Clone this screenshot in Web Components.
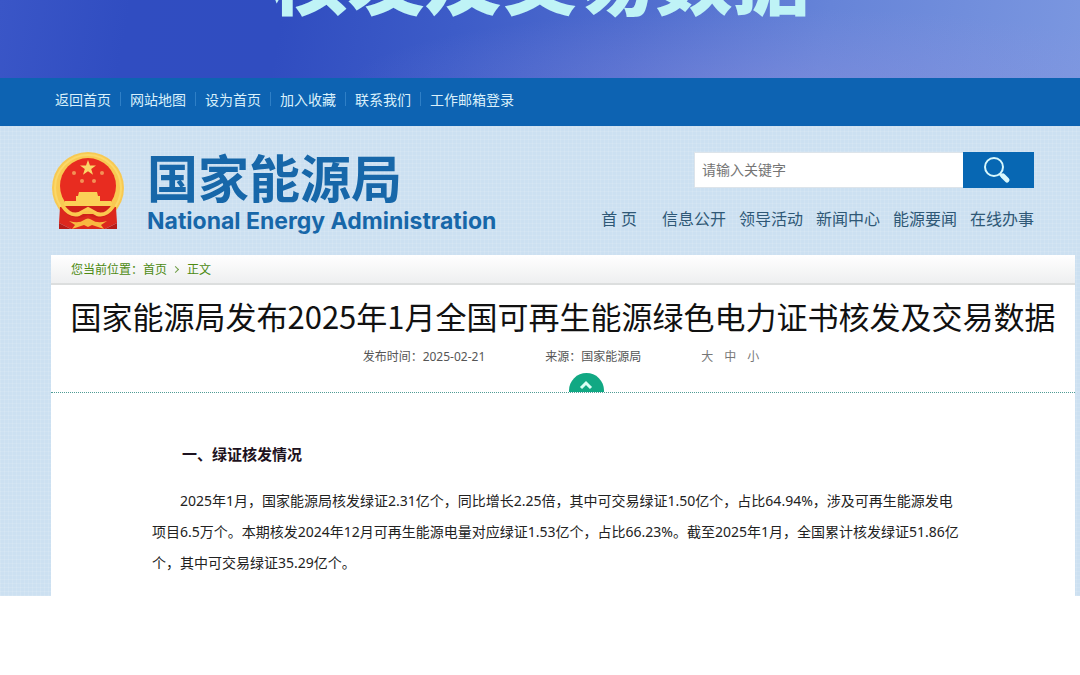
<!DOCTYPE html>
<html lang="zh-CN">
<head>
<meta charset="UTF-8">
<meta name="viewport" content="width=device-width, initial-scale=1">
<title>国家能源局</title>
<style>
  body {
    margin: 0;
    background: #ffffff;
    color: #1a1a1a;
    font-family: "Noto Sans CJK SC", sans-serif;
  }
</style>
</head>
<body>
<site-banner>核发及交易数据</site-banner>

<top-links>
  <a href="#home">返回首页</a>
  <a href="#map">网站地图</a>
  <a href="#set-home">设为首页</a>
  <a href="#favorite">加入收藏</a>
  <a href="#contact">联系我们</a>
  <a href="#mail">工作邮箱登录</a>
</top-links>

<site-main>
  <site-header>
    <site-logo slot="logo">国家能源局<span slot="en">National Energy Administration</span></site-logo>
    <search-box slot="search" placeholder="请输入关键字"></search-box>
    <a class="first" href="#home">首 页</a>
    <a href="#info">信息公开</a>
    <a href="#leader">领导活动</a>
    <a href="#news">新闻中心</a>
    <a href="#energy">能源要闻</a>
    <a href="#service">在线办事</a>
  </site-header>

  <article-card>
    <crumb-bar slot="crumb"><a href="#home">首页</a><a href="#text">正文</a></crumb-bar>
    <h1 slot="title">国家能源局发布2025年1月全国可再生能源绿色电力证书核发及交易数据</h1>
    <span slot="date">2025-02-21</span>
    <span slot="source">国家能源局</span>
    <h2>一、绿证核发情况</h2>
    <p>2025年1月，国家能源局核发绿证2.31亿个，同比增长2.25倍，其中可交易绿证1.50亿个，占比64.94%，涉及可再生能源发电项目6.5万个。本期核发2024年12月可再生能源电量对应绿证1.53亿个，占比66.23%。截至2025年1月，全国累计核发绿证51.86亿个，其中可交易绿证35.29亿个。</p>
  </article-card>
</site-main>

<script>
function define(name, html, setup) {
  const template = document.createElement('template');
  template.innerHTML = html;

  customElements.define(name, class extends HTMLElement {
    constructor() {
      super();
      this.attachShadow({ mode: 'open' }).append(template.content.cloneNode(true));
    }

    connectedCallback() {
      setup?.(this, this.shadowRoot);
    }
  });
}

define('site-banner', `
  <style>
    :host {
      display: flex;
      align-items: flex-end;
      justify-content: center;
      box-sizing: border-box;
      height: 78px;
      padding-bottom: 64px;
      overflow: hidden;
      background:
        radial-gradient(ellipse 40% 100% at 72% 110%, rgba(150, 150, 225, 0.35), transparent),
        linear-gradient(100deg, #3a56c7 0%, #304dc1 12%, #304dc0 26%, #3d5cc8 42%, #4f6cce 58%, #6684d8 76%, #7b97e0 100%);
      color: #bff3f6;
      font-size: 77px;
      font-weight: 900;
      line-height: 77px;
      white-space: nowrap;
    }
  </style>
  <slot></slot>
`);

define('top-links', `
  <style>
    :host {
      display: block;
      background: #0d63b2;
    }

    nav {
      display: flex;
      align-items: center;
      height: 48px;
      padding: 0 46px;
      padding-bottom: 6px;
      box-sizing: border-box;
    }

    ::slotted(a) {
      padding: 0 9px;
      border-left: 1px solid #2f7fc6;
      color: #d9f0fb;
      font-size: 14px;
      line-height: 14px;
      text-decoration: none;
    }

    ::slotted(a:first-child) {
      border-left: 0;
    }
  </style>
  <nav><slot></slot></nav>
`);

define('site-main', `
  <style>
    :host {
      display: block;
      padding: 26px 5px 0 51px;
      background:
        repeating-linear-gradient(90deg, rgba(255, 255, 255, 0.1) 0 1px, transparent 1px 4px),
        repeating-linear-gradient(0deg, rgba(255, 255, 255, 0.1) 0 1px, transparent 1px 4px),
        #cce0f1;
    }
  </style>
  <slot></slot>
`);

define('site-header', `
  <style>
    :host {
      display: flex;
      justify-content: space-between;
      height: 103px;
      padding-right: 41px;
    }

    .side {
      display: flex;
      flex-direction: column;
      align-items: flex-end;
      gap: 18px;
    }

    nav {
      display: flex;
      gap: 13px;
    }

    ::slotted(a) {
      color: #2f5876;
      font-size: 16px;
      line-height: 24px;
      text-decoration: none;
      white-space: nowrap;
    }

    ::slotted(a.first) {
      margin-right: 12px;
    }
  </style>
  <slot name="logo"></slot>
  <div class="side">
    <slot name="search"></slot>
    <nav><slot></slot></nav>
  </div>
`);

define('site-logo', `
  <style>
    :host {
      display: flex;
      align-items: flex-start;
      gap: 22px;
      color: #1767a9;
    }

    svg {
      flex: none;
      width: 74px;
      height: 78px;
    }

    .name {
      font-family: "Liberation Sans", "Noto Sans CJK SC", sans-serif;
      font-size: 51px;
      font-weight: 700;
      line-height: 58px;
      white-space: nowrap;
    }

    .en {
      font-family: Inter, "Liberation Sans", sans-serif;
      font-size: 23px;
      font-weight: 700;
      line-height: 22px;
      white-space: nowrap;
    }
  </style>
  <svg viewBox="0 0 74 78" aria-hidden="true">
    <circle cx="37" cy="36" r="36" fill="#f8c952"/>
    <circle cx="37" cy="36" r="33" fill="none" stroke="#fbd868" stroke-width="2"/>
    <path d="M9 55 L8 71 L20 77 H54 L66 71 L65 55 Z" fill="#dc281d"/>
    <path d="M8 71 L20 77 H8 Z M66 71 L54 77 H66 Z" fill="#b81c18"/>
    <circle cx="37" cy="34" r="28" fill="#e82c20"/>
    <path d="M37 8 l2 5.500 6 0 -4.800 3.600 1.800 5.600 -5 -3.500 -5 3.500 1.800 -5.600 -4.800 -3.600 6 0 Z" fill="#fbd768"/>
    <g fill="#f29256">
      <circle cx="23" cy="21" r="2"/>
      <circle cx="51" cy="21" r="2"/>
      <circle cx="31" cy="29" r="2"/>
      <circle cx="43" cy="29" r="2"/>
    </g>
    <path d="M28 40 h18 l1 4 h2 v6 h-24 v-6 h2 Z M14 49 H60 L62 54 H12 Z" fill="#fbd157"/>
    <path d="M11 54 H63 L57 63 Q46 69 37 63 Q28 69 17 63 Z" fill="#cf2119"/>
    <path d="M11 53 Q19 65 28 62 L37 57 L46 62 Q55 65 63 53" fill="none" stroke="#fbc94f" stroke-width="4"/>
    <path d="M32 60 Q37 57 42 60 L44 62 H30 Z" fill="#f8c24a"/>
    <path d="M18 69 Q28 72 33 68 Q37 65 41 68 Q46 72 56 69 L50 73 L53 77 L41 73 L37 75 L33 73 L21 77 L24 73 Z" fill="#f8b840"/>
  </svg>
  <div>
    <div class="name"><slot></slot></div>
    <div class="en"><slot name="en"></slot></div>
  </div>
`);

define('search-box', `
  <style>
    :host {
      display: block;
    }

    form {
      display: flex;
      width: 340px;
      height: 36px;
      margin: 0;
    }

    input {
      flex: 1;
      min-width: 0;
      box-sizing: border-box;
      padding: 0 7px 2px;
      border: 1px solid #dde4ea;
      border-right: 0;
      border-radius: 0;
      background: #ffffff;
      font-family: inherit;
      font-size: 14px;
    }

    input::placeholder {
      color: #757575;
      opacity: 1;
    }

    button {
      display: flex;
      align-items: center;
      justify-content: center;
      width: 71px;
      padding: 0 6px 0 0;
      border: 0;
      background: #0767b3;
      cursor: pointer;
    }
  </style>
  <form>
    <input type="search" aria-label="搜索">
    <button type="button" aria-label="搜索">
      <svg width="30" height="30" viewBox="0 0 30 30" fill="none" stroke="#d8f8fc">
        <circle cx="13" cy="12" r="9" stroke-width="2"/>
        <path d="M19 19 L22 22" stroke-width="3"/>
        <path d="M22 21 L26 25" stroke-width="5" stroke-linecap="round"/>
      </svg>
    </button>
  </form>
`, (host, root) => {
  root.querySelector('input').placeholder = host.getAttribute('placeholder') || '';
});

define('crumb-bar', `
  <style>
    :host {
      display: block;
      color: #4c8a12;
      font-size: 12px;
    }

    nav {
      display: flex;
      align-items: center;
      box-sizing: border-box;
      height: 30px;
      padding: 0 20px 2px;
      border-bottom: 2px solid #dcdede;
      background: linear-gradient(#ffffff, #eeeff0);
    }

    ::slotted(a) {
      color: inherit;
      text-decoration: none;
    }

    ::slotted(a:last-child)::before {
      content: "";
      display: inline-block;
      width: 4px;
      height: 4px;
      margin: 0 9px 2px 6px;
      border: solid #6f9d45;
      border-width: 1px 1px 0 0;
      transform: rotate(45deg);
    }
  </style>
  <nav aria-label="当前位置"><span>您当前位置：</span><slot></slot></nav>
`);

define('article-card', `
  <style>
    :host {
      display: block;
      background: #ffffff;
    }

    header {
      display: flex;
      flex-direction: column;
      align-items: center;
      border-bottom: 1px dotted #4f9c95;
    }

    ::slotted(h1) {
      margin: 8px 0 12px;
      color: #111111;
      font-size: 31px;
      font-weight: 400;
      line-height: 46px;
      text-align: center;
    }

    .meta {
      display: flex;
      gap: 60px;
      padding-right: 4px;
      color: #555555;
      font-family: "Noto Sans", "Noto Sans CJK SC", sans-serif;
      font-size: 12px;
      line-height: 12px;
    }

    .sizes {
      display: flex;
      gap: 11px;
    }

    .sizes button {
      padding: 0;
      border: 0;
      background: none;
      color: #777777;
      font: inherit;
      cursor: pointer;
    }

    .body {
      padding: 43px 110px 18px 101px;
    }

    ::slotted(h2) {
      margin: 0;
      color: #1d1220;
      font-size: 15px;
      font-weight: 700;
      line-height: 36px;
      text-indent: 2em;
    }

    ::slotted(p) {
      margin: 13px 0 0;
      color: #222222;
      font-family: "Noto Sans", "Noto Sans CJK SC", sans-serif;
      font-size: 14px;
      line-height: 31px;
      text-indent: 2em;
    }
  </style>
  <slot name="crumb"></slot>
  <header>
    <slot name="title"></slot>
    <div class="meta">
      <span>发布时间：<slot name="date"></slot></span>
      <span>来源：<slot name="source"></slot></span>
      <div class="sizes">
        <button type="button">大</button>
        <button type="button">中</button>
        <button type="button">小</button>
      </div>
    </div>
    <fold-button></fold-button>
  </header>
  <div class="body"><slot></slot></div>
`);

define('fold-button', `
  <style>
    :host {
      display: block;
      padding: 10px 0 0 46px;
    }

    button {
      display: flex;
      align-items: center;
      justify-content: center;
      width: 35px;
      height: 19px;
      padding: 4px 0 0;
      border: 0;
      border-radius: 18px 18px 0 0;
      background: #11a883;
      cursor: pointer;
    }
  </style>
  <button type="button" aria-label="收起">
    <svg width="14" height="10" viewBox="0 0 14 10" fill="none" stroke="#d9fff4" stroke-width="3">
      <path d="M2 8 L7 3 L12 8"/>
    </svg>
  </button>
`);
</script>
</body>
</html>
